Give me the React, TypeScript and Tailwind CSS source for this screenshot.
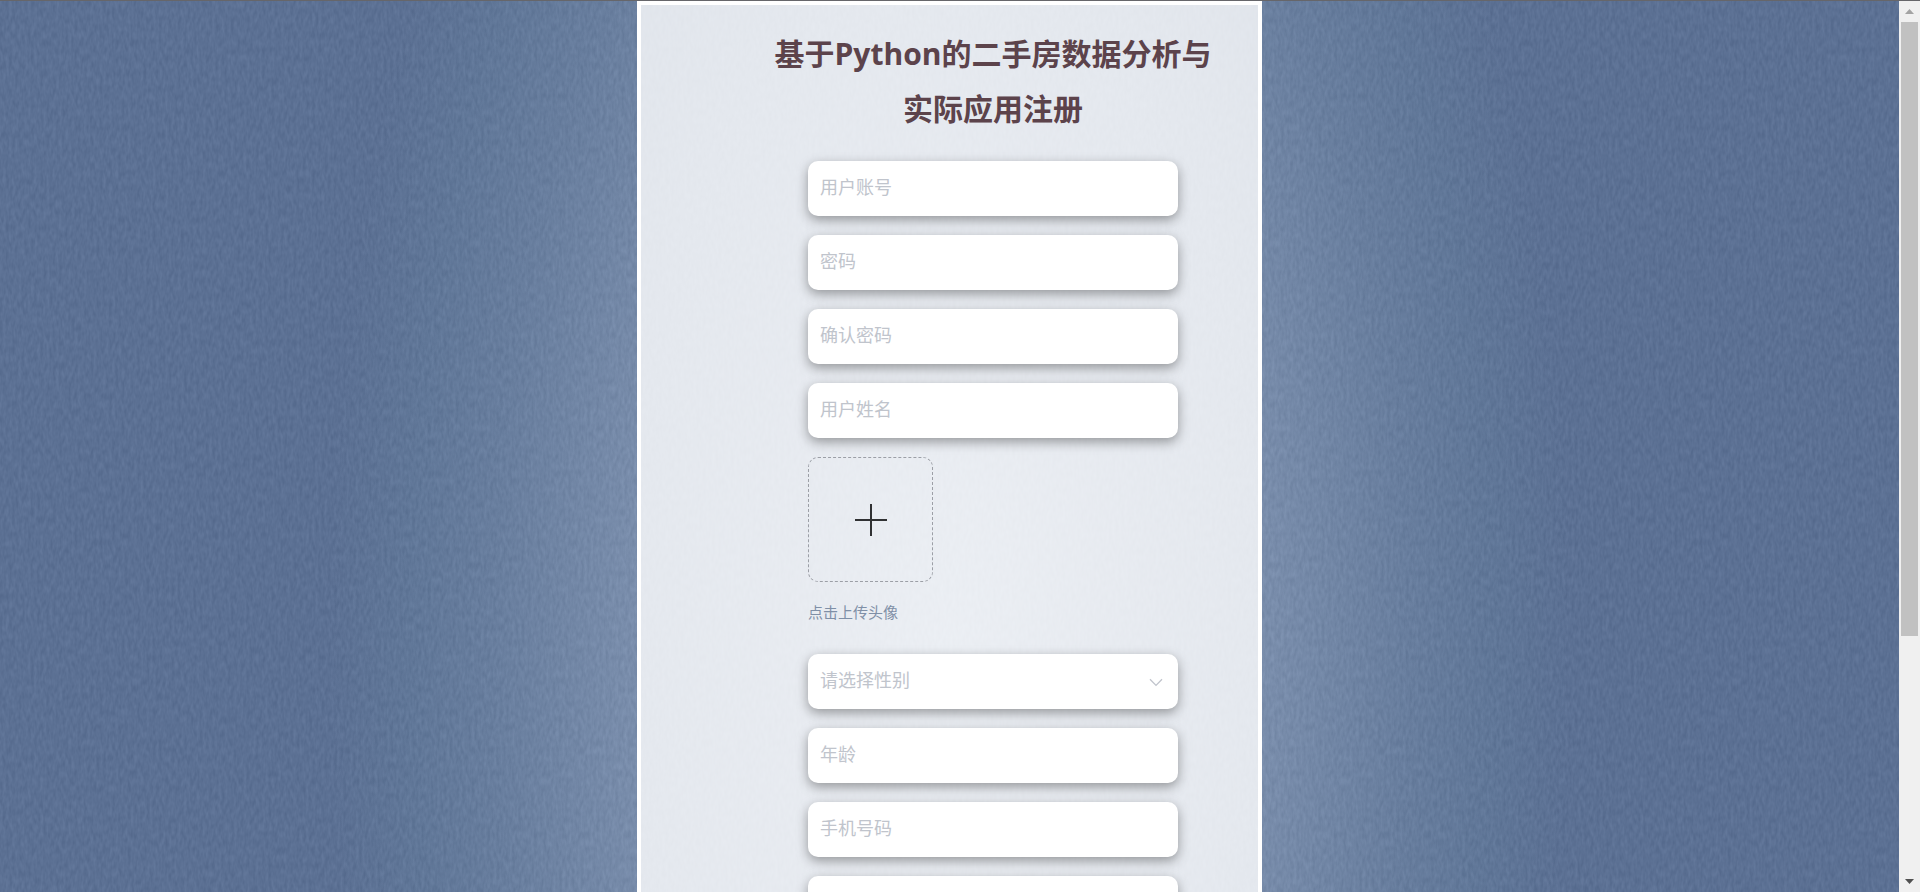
import React from "react";

const fieldStyle =
  "block h-[55px] w-full rounded-[10px] bg-white px-3 pb-[3px] text-[18px] text-[#606266] shadow-[0_4px_12px_rgba(0,0,0,0.36)] outline-none placeholder:text-[#c0c4cc] placeholder:opacity-100";

function Field({ label, type = "text", hint = true }: { label: string; type?: string; hint?: boolean }) {
  return <input className={fieldStyle} type={type} aria-label={label} placeholder={hint ? label : undefined} />;
}

function Grain() {
  return (
    <svg className="pointer-events-none absolute inset-0 h-full w-full opacity-5" aria-hidden="true">
      <filter id="grain" x="0" y="0" width="100%" height="100%" colorInterpolationFilters="sRGB">
        <feTurbulence type="fractalNoise" baseFrequency="0.32 0.13" numOctaves="2" seed="4" />
        <feColorMatrix type="matrix" values="1.6 0 0 0 -0.3  1.6 0 0 0 -0.3  1.6 0 0 0 -0.3  0 0 0 0 1" />
      </filter>
      <rect width="100%" height="100%" filter="url(#grain)" />
    </svg>
  );
}

function AvatarUpload() {
  return (
    <div>
      <button
        type="button"
        aria-labelledby="avatar-tip"
        className="flex h-[125px] w-[125px] items-center justify-center rounded-[10px] border border-dashed border-[#9c9fa6]"
      >
        <svg width="34" height="34" viewBox="0 0 34 34" stroke="#303133" strokeWidth="2" aria-hidden="true">
          <path d="M1 17H33M17 1V33" />
        </svg>
      </button>
      <p id="avatar-tip" className="pt-[19px] pb-3 text-[15px] leading-[22px] text-[#7f8fa6]">
        点击上传头像
      </p>
    </div>
  );
}

function GenderSelect() {
  return (
    <div className="relative">
      <select
        aria-label="请选择性别"
        defaultValue=""
        className="block h-[55px] w-full appearance-none rounded-[10px] bg-white px-3 pb-[3px] text-[18px] text-[#c0c4cc] shadow-[0_4px_12px_rgba(0,0,0,0.36)] outline-none"
      >
        <option value="">请选择性别</option>
        <option value="男">男</option>
        <option value="女">女</option>
      </select>
      <svg
        className="pointer-events-none absolute top-6 right-[15px]"
        width="14"
        height="9"
        viewBox="0 0 14 9"
        fill="none"
        stroke="#c0c4cc"
        strokeWidth="1.3"
        aria-hidden="true"
      >
        <path d="M1 1.2L7 7.4L13 1.2" />
      </svg>
    </div>
  );
}

function ScrollRail() {
  return (
    <div className="flex w-[21px] shrink-0 flex-col bg-[#f0f0f0]">
      <button type="button" aria-label="向上滚动" className="flex h-[21px] items-center justify-center">
        <svg width="9" height="5" viewBox="0 0 9 5" fill="#a3a3a3">
          <path d="M0 5L4.500 0L9 5Z" />
        </svg>
      </button>
      <div className="flex grow flex-col px-[2px]">
        <div className="flex-[614] bg-[#c1c1c1]" />
        <div className="flex-[235]" />
      </div>
      <button type="button" aria-label="向下滚动" className="flex h-[21px] items-center justify-center">
        <svg width="9" height="5" viewBox="0 0 9 5" fill="#505050">
          <path d="M0 0L4.500 5L9 0Z" />
        </svg>
      </button>
    </div>
  );
}

export default function App() {
  return (
    <div className="flex h-screen overflow-hidden border-t border-[#66666a] font-['Open_Sans','Noto_Sans_CJK_SC',sans-serif]">
      <main className="relative min-w-0 grow overflow-hidden bg-[radial-gradient(620px_1300px_at_50%_640px,#9dafc9_0%,#8b9dba_25%,#798eae_52%,#677ea0_74%,#5f779a_87%,#5a7095_100%)]">
        <Grain />
        <div className="relative h-full overflow-y-auto [scrollbar-width:none]">
          <form
            className="mx-auto w-[625px] border-4 border-white bg-white/80 pt-[21px] pr-9 pb-10 pl-[123px]"
            onSubmit={(e) => e.preventDefault()}
          >
            <h1 className="text-center text-[30px] leading-[55px] font-bold text-[#5c434b]">
              基于Python的二手房数据分析与实际应用注册
            </h1>
            <div className="mt-[25px] flex flex-col gap-[19px] px-11">
              <Field label="用户账号" />
              <Field label="密码" type="password" />
              <Field label="确认密码" type="password" />
              <Field label="用户姓名" />
              <AvatarUpload />
              <GenderSelect />
              <Field label="年龄" />
              <Field label="手机号码" type="tel" />
              <Field label="邮箱" type="email" hint={false} />
            </div>
          </form>
        </div>
      </main>
      <ScrollRail />
    </div>
  );
}
